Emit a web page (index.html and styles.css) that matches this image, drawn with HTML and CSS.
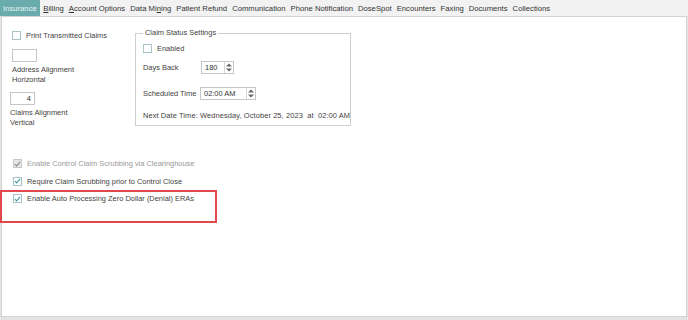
FILE: index.html
```html
<!DOCTYPE html>
<html>
<head>
<meta charset="utf-8">
<link rel="stylesheet" href="styles.css">
</head>
<body>
<div class="tabs">
  <span class="tab active">Insurance</span>
  <span class="tab"><u>B</u>illing</span>
  <span class="tab"><u>A</u>ccount Options</span>
  <span class="tab">Data Mi<u>n</u>ing</span>
  <span class="tab">Patient Refund</span>
  <span class="tab">Communication</span>
  <span class="tab">Phone Notification</span>
  <span class="tab">DoseSpot</span>
  <span class="tab">Encounters</span>
  <span class="tab">Faxing</span>
  <span class="tab">Documents</span>
  <span class="tab">Collections</span>
</div>
<div class="panel">
  <div class="top">
    <div class="left">
      <label class="check"><span class="box"></span>Print Transmitted Claims</label>
      <div class="field">
        <span class="input w24"></span>
        <span class="lbl">Address Alignment<br>Horizontal</span>
      </div>
      <div class="field f2">
        <span class="input w24 right">4</span>
        <span class="lbl">Claims Alignment<br>Vertical</span>
      </div>
    </div>
    <fieldset class="group">
      <legend>Claim Status Settings</legend>
      <label class="check"><span class="box"></span>Enabled</label>
      <div class="row r1">
        <span class="rl">Days Back</span>
        <span class="input spin w32">180<span class="arrows"><svg width="6" height="9" viewBox="0 0 6 9"><path d="M0 3.5L3 0.5L6 3.5Z M0 5.5L3 8.5L6 5.5Z" fill="#666"/></svg></span></span>
      </div>
      <div class="row r2">
        <span class="rl">Scheduled Time</span>
        <span class="input spin w55">02:00 AM<span class="arrows"><svg width="6" height="9" viewBox="0 0 6 9"><path d="M0 3.5L3 0.5L6 3.5Z M0 5.5L3 8.5L6 5.5Z" fill="#666"/></svg></span></span>
      </div>
      <div class="next">Next Date Time: Wednesday, October 25, 2023 &nbsp;at &nbsp;02:00 AM</div>
    </fieldset>
  </div>
  <div class="checks">
    <label class="check disabled"><span class="box on"><svg width="8" height="8" viewBox="0 0 8 8"><path d="M1 4.2L3 6.2L7 1.5" stroke="#8a8a8a" stroke-width="1.2" fill="none"/></svg></span>Enable Control Claim Scrubbing via Clearinghouse</label>
    <label class="check"><span class="box on"><svg width="8" height="8" viewBox="0 0 8 8"><path d="M1 4.2L3 6.2L7 1.5" stroke="#3f9aa3" stroke-width="1.2" fill="none"/></svg></span>Require Claim Scrubbing prior to Control Close</label>
    <label class="check"><span class="box on"><svg width="8" height="8" viewBox="0 0 8 8"><path d="M1 4.2L3 6.2L7 1.5" stroke="#3f9aa3" stroke-width="1.2" fill="none"/></svg></span>Enable Auto Processing Zero Dollar (Denial) ERAs</label>
  </div>
  <div class="highlight"></div>
</div>
</body>
</html>
```
FILE: styles.css
```css
html, body {
  margin: 0;
  padding: 0;
}
body {
  width: 688px;
  height: 320px;
  background: #e4e4e4;
  font-family: "Liberation Sans", Arial, sans-serif;
  font-size: 7.45px;
  color: #3f3f3f;
  overflow: hidden;
}
.tabs {
  display: flex;
  height: 16px;
  background: #f2f2f2;
  align-items: stretch;
  font-size: 7.7px;
}
.tab {
  display: flex;
  align-items: center;
  padding: 0 2.5px;
  color: #333;
  white-space: nowrap;
}
.tab.active {
  background: #6aabad;
  color: #e8f4f4;
  padding: 0 3px;
  margin-right: 1px;
}
.panel {
  position: relative;
  height: 301px;
  margin: 0 1px 0 1px;
  background: #fff;
  border: 1px solid #d2d2d2;
  box-sizing: border-box;
}
.top {
  display: flex;
  padding-top: 13px;
}
.left {
  width: 133px;
  padding-left: 10px;
  box-sizing: border-box;
}
.check {
  display: flex;
  align-items: center;
  height: 10px;
  white-space: nowrap;
}
.box {
  width: 9px;
  height: 9px;
  border: 1px solid #aac3c6;
  box-sizing: border-box;
  margin-right: 5px;
  display: flex;
  align-items: center;
  justify-content: center;
  background: #fff;
  flex: none;
}
.box svg { display: block; }
.disabled { color: #9a9a9a; }
.disabled .box { background: #e6e6e6; border-color: #c8c8c8; }
.field {
  margin-top: 9px;
  display: flex;
  flex-direction: column;
}
.field.f2 { margin-top: 7px; margin-left: -2px; }
.input {
  display: flex;
  align-items: center;
  height: 13px;
  border: 1px solid #c6c6c6;
  box-sizing: border-box;
  padding: 0 3px;
  background: #fff;
  color: #333;
}
.w24 { width: 25px; }
.right { justify-content: flex-end; }
.lbl {
  margin-top: 3px;
  line-height: 10px;
}
.group {
  margin: -1px 0 0 0;
  padding: 0 0 8px 7px;
  width: 216px;
  height: 97px;
  box-sizing: border-box;
  border: 1px solid #cfcfcf;
  min-width: 0;
  overflow: hidden;
}
.group legend {
  padding: 0 2px;
  margin-left: 0;
  line-height: 8px;
}
.group .check { margin-top: 6px; }
.row {
  display: flex;
  align-items: center;
  margin-top: 8px;
}
.row.r2 { margin-top: 13px; }
.rl { width: 58px; white-space: nowrap; }
.r2 .rl { width: 57px; }
.spin {
  justify-content: space-between;
  padding-right: 0;
}
.w32 { width: 33px; }
.w55 { width: 56px; }
.arrows {
  display: flex;
  align-items: center;
  justify-content: center;
  width: 8px;
  height: 11px;
  border-left: 1px solid #d6d6d6;
}
.next {
  margin-top: 11px;
  white-space: nowrap;
  letter-spacing: 0.1px;
}
.checks {
  margin-top: 30.5px;
  padding-left: 11px;
  display: flex;
  flex-direction: column;
  gap: 7.5px;
}
.highlight {
  position: absolute;
  left: -2px;
  top: 173px;
  width: 217px;
  height: 33px;
  border: 2px solid #e0484c;
  box-sizing: border-box;
}
```
